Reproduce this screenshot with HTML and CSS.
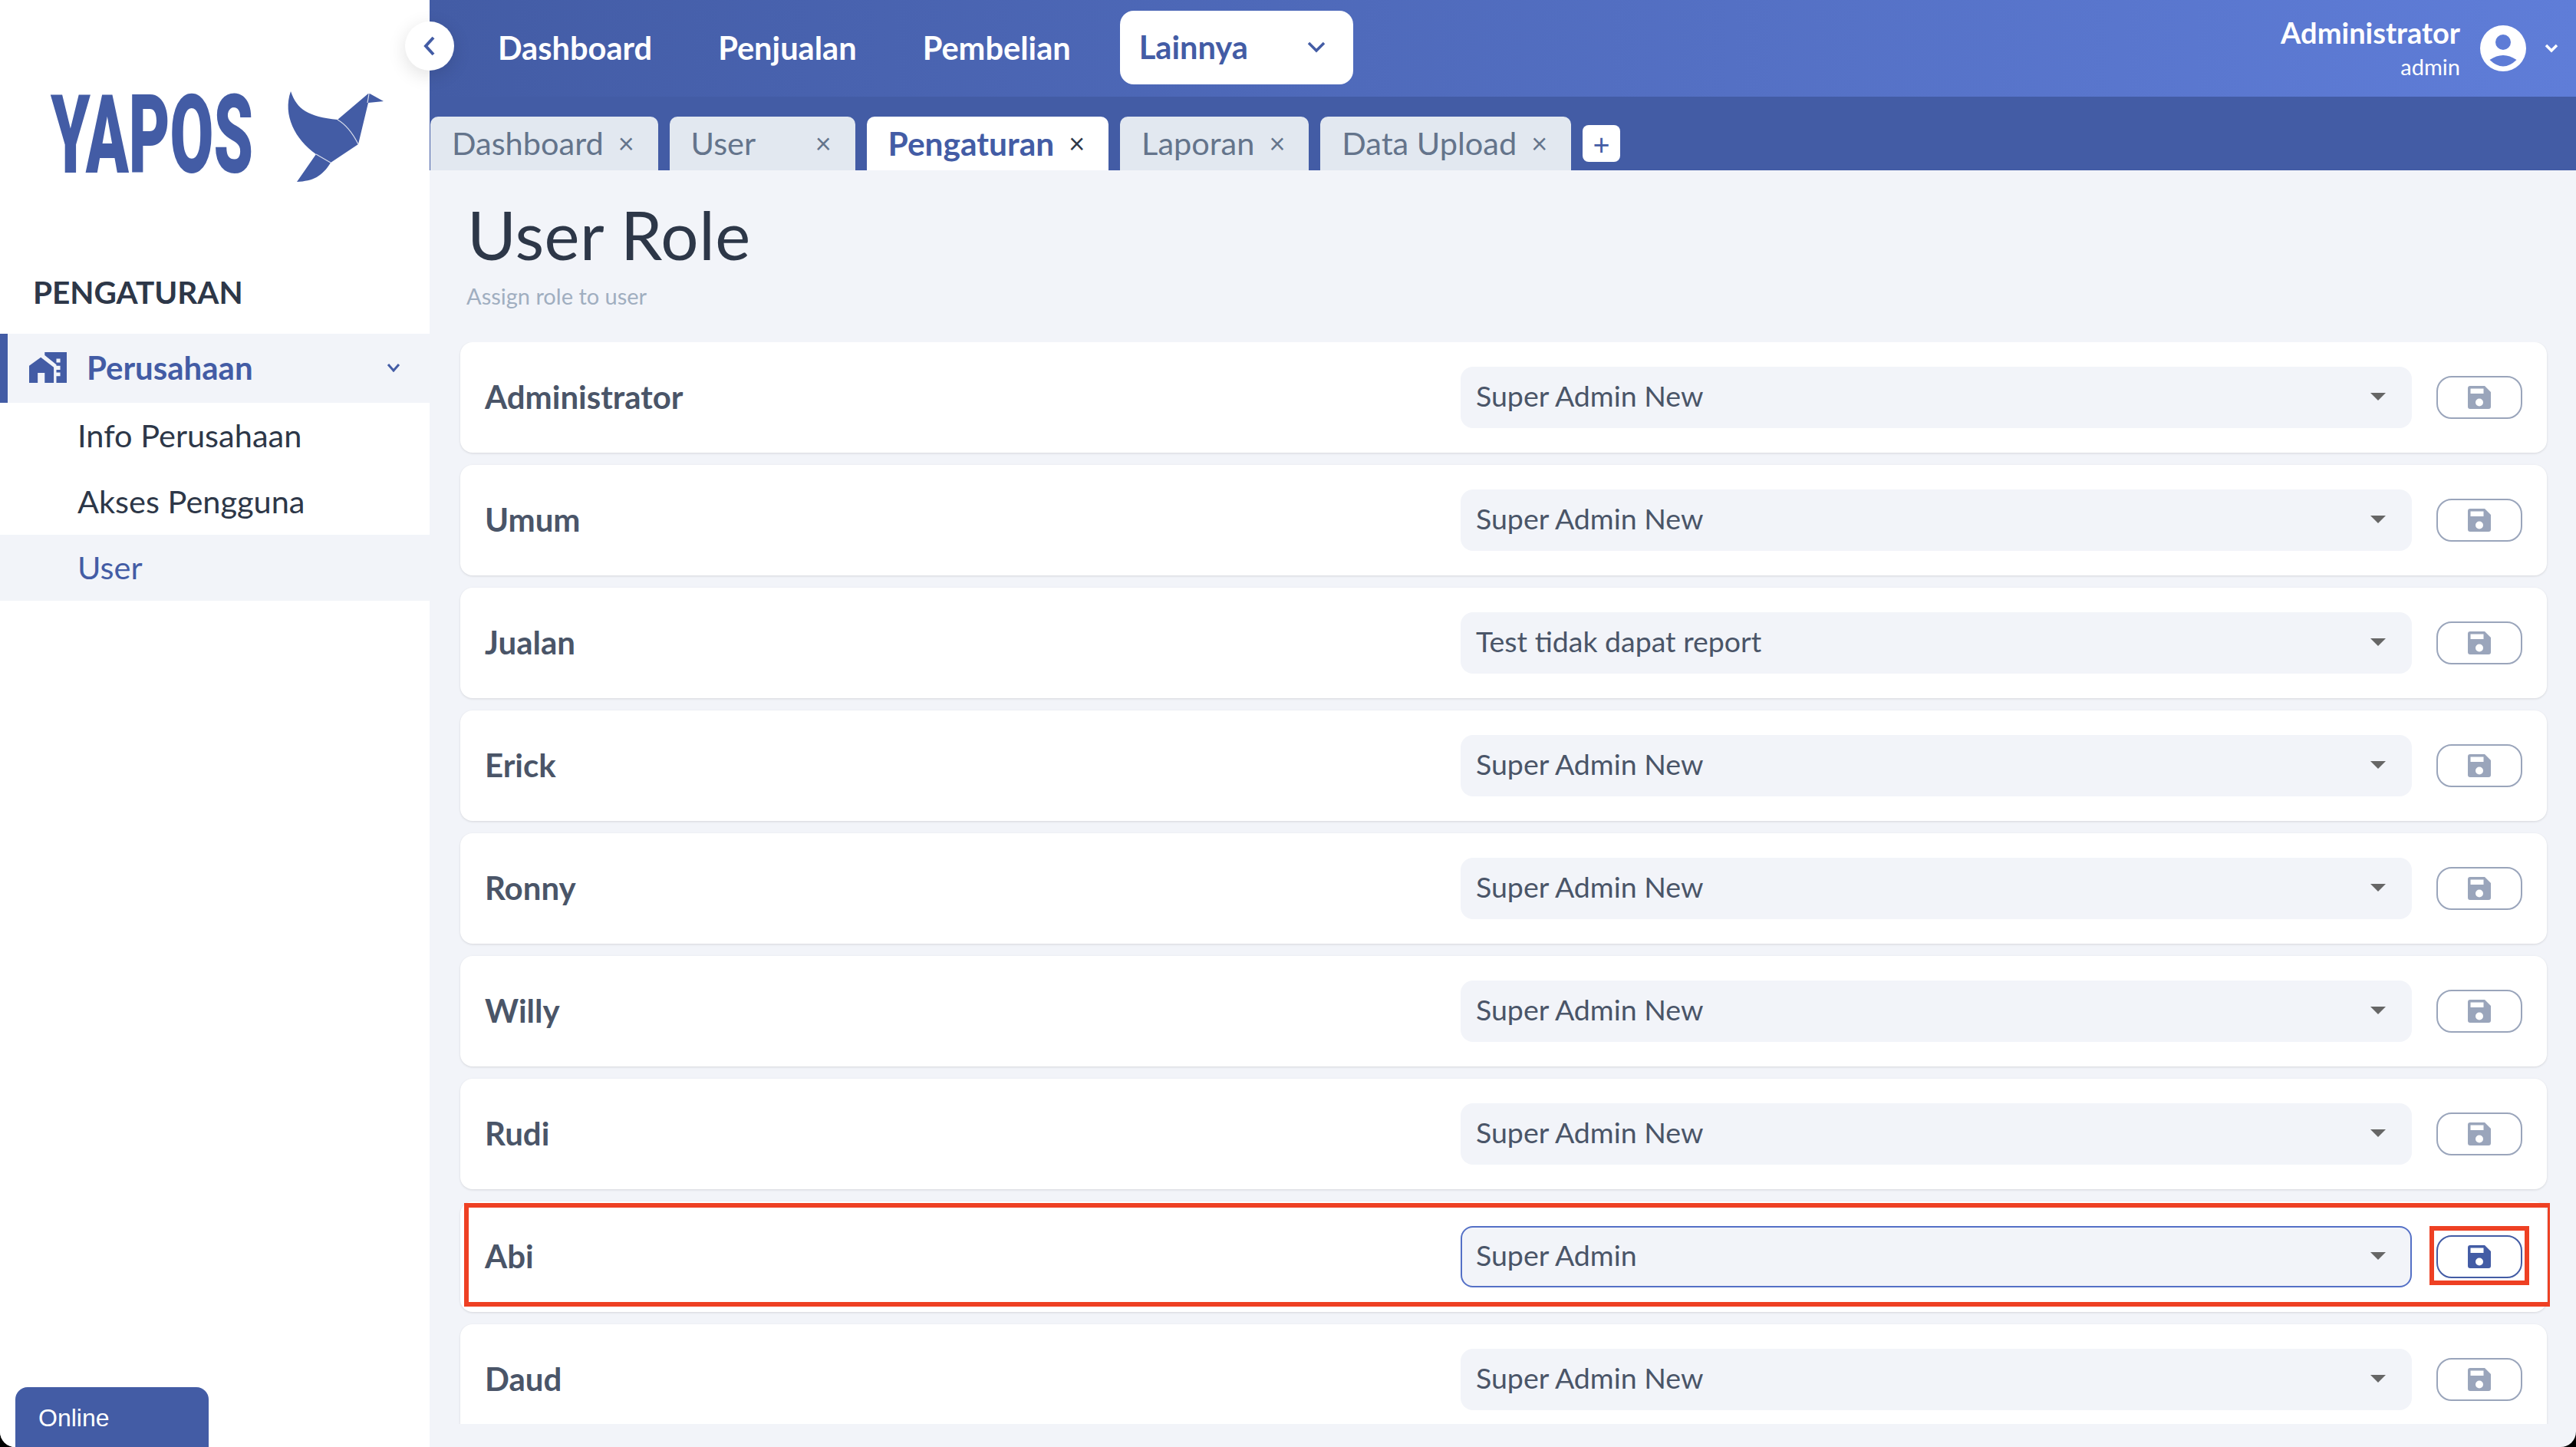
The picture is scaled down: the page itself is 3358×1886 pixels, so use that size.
FILE: index.html
```html
<!DOCTYPE html>
<html lang="en">
<head>
<meta charset="UTF-8" />
<title>YAPOS - User Role</title>
<link rel="stylesheet" href="styles.css">
</head>
<body>
<svg class="defs" width="0" height="0">
  <symbol id="save" viewBox="0 0 30 30">
    <path fill-rule="evenodd" d="M3 0H22L30 8V27a3 3 0 0 1-3 3H3a3 3 0 0 1-3-3V3a3 3 0 0 1 3-3ZM3.5 3.5V10H20.5V3.5ZM15 16.5a5 5 0 1 0 0 10a5 5 0 0 0 0-10Z"/>
  </symbol>
</svg>

<div class="app">
  <aside class="sidebar">
    <svg class="logo" viewBox="0 0 520 170" width="520" height="170">
      <text class="logo-text" x="26" y="135" textLength="264" lengthAdjust="spacingAndGlyphs">YAPOS</text>
      <path class="bird" d="M339 29C347 53 362 62 400 66L440 32H442L460 42L440 44L427 98L391 122C380 140 368 146 347 147L372 111C345 92 328 60 339 29Z"/>
      <path class="crease" d="M400 66C412 73 420 84 427 98M372 111L391 122M441 32L439 44"/>
    </svg>
    <h2 class="side-title">PENGATURAN</h2>
    <nav class="side-menu">
      <a class="side-parent">
        <svg class="house" viewBox="55 60 145 118" width="49" height="40">
          <path d="M55 112L100 80L150 118V178H115V140H88V178H55Z"/>
          <path d="M115 60H200V178H160V152H175V138H160V128H175V112H160V100H175V85H160V108L115 72Z"/>
        </svg>
        <span>Perusahaan</span>
        <svg class="side-chevron" viewBox="0 0 18 12" width="18" height="12"><path d="M2 2L9 10L16 2"/></svg>
      </a>
      <a class="side-item">Info Perusahaan</a>
      <a class="side-item">Akses Pengguna</a>
      <a class="side-item active">User</a>
    </nav>
    <div class="online">Online</div>
  </aside>

  <main class="main">
    <header class="topbar">
      <nav class="top-nav">
        <a>Dashboard</a>
        <a>Penjualan</a>
        <a>Pembelian</a>
        <a class="more">Lainnya
          <svg viewBox="0 0 24 16" width="24" height="16"><path d="M2 3L12 13L22 3"/></svg>
        </a>
      </nav>
      <div class="account">
        <div class="account-name">
          <strong>Administrator</strong>
          <span>admin</span>
        </div>
        <svg class="avatar" viewBox="0 0 60 60" width="60" height="60">
          <path fill-rule="evenodd" d="M30 0a30 30 0 1 0 0 60a30 30 0 0 0 0-60ZM30 12a10 10 0 1 1 0 20a10 10 0 0 1 0-20ZM12.5 45Q30 33 47.5 45Q30 62 12.5 45Z"/>
        </svg>
        <svg class="account-chevron" viewBox="0 0 18 12" width="18" height="12"><path d="M2 2L9 9L16 2"/></svg>
      </div>
    </header>

    <div class="tabbar">
      <div class="tab">Dashboard <i>×</i></div>
      <div class="tab tab-user">User <i>×</i></div>
      <div class="tab active">Pengaturan <i>×</i></div>
      <div class="tab">Laporan <i>×</i></div>
      <div class="tab">Data Upload <i>×</i></div>
      <button class="tab-add">+</button>
    </div>

    <section class="content">
      <h1>User Role</h1>
      <p class="subtitle">Assign role to user</p>

      <div class="role-list">
        <div class="role-card">
          <div class="role-name">Administrator</div>
          <div class="select">Super Admin New</div>
          <button class="save"><svg width="30" height="30"><use href="#save"/></svg></button>
        </div>
        <div class="role-card">
          <div class="role-name">Umum</div>
          <div class="select">Super Admin New</div>
          <button class="save"><svg width="30" height="30"><use href="#save"/></svg></button>
        </div>
        <div class="role-card">
          <div class="role-name">Jualan</div>
          <div class="select">Test tidak dapat report</div>
          <button class="save"><svg width="30" height="30"><use href="#save"/></svg></button>
        </div>
        <div class="role-card">
          <div class="role-name">Erick</div>
          <div class="select">Super Admin New</div>
          <button class="save"><svg width="30" height="30"><use href="#save"/></svg></button>
        </div>
        <div class="role-card">
          <div class="role-name">Ronny</div>
          <div class="select">Super Admin New</div>
          <button class="save"><svg width="30" height="30"><use href="#save"/></svg></button>
        </div>
        <div class="role-card">
          <div class="role-name">Willy</div>
          <div class="select">Super Admin New</div>
          <button class="save"><svg width="30" height="30"><use href="#save"/></svg></button>
        </div>
        <div class="role-card">
          <div class="role-name">Rudi</div>
          <div class="select">Super Admin New</div>
          <button class="save"><svg width="30" height="30"><use href="#save"/></svg></button>
        </div>
        <div class="role-card changed">
          <div class="role-name">Abi</div>
          <div class="select">Super Admin</div>
          <button class="save"><svg width="30" height="30"><use href="#save"/></svg></button>
          <div class="mark mark-row"></div>
          <div class="mark mark-save"></div>
        </div>
        <div class="role-card">
          <div class="role-name">Daud</div>
          <div class="select">Super Admin New</div>
          <button class="save"><svg width="30" height="30"><use href="#save"/></svg></button>
        </div>
      </div>
    </section>
  </main>

  <button class="collapse">
    <svg viewBox="0 0 16 26" width="16" height="26"><path d="M13 2L3 13L13 24"/></svg>
  </button>
</div>
</body>
</html>
```

FILE: styles.css
```css
/* Reset and base */
* {
  box-sizing: border-box;
}
html, body {
  margin: 0;
  height: 100%;
  background: #000;
  overflow: hidden;
  font-family: Lato, "Noto Sans", sans-serif;
  color: #2d3748;
}
.defs {
  position: absolute;
}
.app {
  position: relative;
  display: flex;
  height: 100%;
  background: #f2f4f9;
  border-radius: 0 0 20px 20px;
  overflow: hidden;
}

/* Sidebar */
.sidebar {
  width: 560px;
  flex: none;
  display: flex;
  flex-direction: column;
  background: #fff;
}
.logo {
  display: block;
  margin: 90px 0 0 40px;
}
.logo-text {
  font-family: Roboto, sans-serif;
  font-weight: 900;
  font-size: 143px;
  fill: #435ca5;
}
.bird {
  fill: #435ca5;
}
.crease {
  fill: none;
  stroke: #fff;
  stroke-width: 1.2;
  opacity: .8;
}
.side-title {
  margin: 97px 0 0 43px;
  height: 78px;
  font-size: 40.5px;
  line-height: 48px;
  font-weight: 700;
}
.side-parent {
  display: flex;
  align-items: center;
  height: 90px;
  padding-left: 28px;
  padding-bottom: 2px;
  border-left: 10px solid #435ca5;
  background: #f2f4f9;
  color: #435ca5;
  font-size: 42px;
  font-weight: 700;
}
.house {
  fill: #435ca5;
  margin-right: 26px;
}
.side-chevron {
  margin-left: auto;
  margin-right: 38px;
  fill: none;
  stroke: #435ca5;
  stroke-width: 3;
}
.side-item {
  display: block;
  height: 86px;
  padding-left: 101px;
  font-size: 41.5px;
  line-height: 84px;
}
.side-item.active {
  background: #f2f4f9;
  color: #435ca5;
}
.online {
  margin: auto 0 0 20px;
  width: 252px;
  height: 78px;
  padding: 22px 0 0 30px;
  border-radius: 16px 16px 0 0;
  background: #435ca5;
  color: #fff;
  font-family: "Liberation Sans", sans-serif;
  font-size: 32px;
  line-height: 36px;
}

/* Top bars */
.main {
  flex: 1;
  min-width: 0;
  display: flex;
  flex-direction: column;
  padding-bottom: 30px;
}
.topbar {
  height: 126px;
  flex: none;
  display: flex;
  align-items: center;
  justify-content: space-between;
  padding: 0 23px 0 89px;
  background: linear-gradient(90deg, #435ca5 0%, #5f7dd8 100%);
}
.top-nav {
  display: flex;
  align-items: center;
  gap: 86px;
  margin-top: -2px;
  color: #fff;
  font-size: 41.6px;
  font-weight: 700;
}
.more {
  display: flex;
  align-items: center;
  justify-content: space-between;
  width: 304px;
  height: 96px;
  margin-left: -22px;
  padding: 0 36px 2px 25px;
  border-radius: 18px;
  background: #fff;
  color: #435ca5;
}
.more svg {
  fill: none;
  stroke: #435ca5;
  stroke-width: 3.5;
}
.account {
  display: flex;
  align-items: center;
  color: #fff;
}
.account-name {
  display: flex;
  flex-direction: column;
  align-items: flex-end;
  margin-right: 26px;
  margin-top: 4px;
}
.account-name strong {
  font-size: 38px;
  line-height: 44px;
  font-weight: 700;
}
.account-name span {
  font-size: 29px;
  line-height: 46px;
}
.avatar {
  fill: #fff;
}
.account-chevron {
  margin-left: 24px;
  fill: none;
  stroke: #fff;
  stroke-width: 3.5;
}

/* Tabs */
.tabbar {
  height: 96px;
  flex: none;
  display: flex;
  align-items: flex-end;
  gap: 15px;
  padding-left: 1px;
  background: #435ca5;
}
.tab {
  display: flex;
  align-items: center;
  justify-content: space-between;
  gap: 19px;
  height: 70px;
  padding: 0 31px 2px 28px;
  border-radius: 10px 10px 0 0;
  background: #e2e8f0;
  color: #64748b;
  font-size: 41.5px;
}
.tab i {
  font-style: normal;
  font-size: 36px;
}
.tab-user {
  width: 242px;
}
.tab.active {
  background: #fff;
  color: #435ca5;
  font-size: 42.5px;
  font-weight: 700;
}
.tab.active i {
  color: #2d3748;
  font-size: 36px;
  font-weight: 400;
}
.tab-add {
  align-self: flex-start;
  width: 49px;
  height: 48px;
  margin-top: 37px;
  padding: 0;
  border: none;
  border-radius: 8px;
  background: #fff;
  color: #435ca5;
  font-family: Lato, sans-serif;
  font-size: 38px;
  line-height: 44px;
}

/* Content */
.content {
  flex: 1;
  min-height: 0;
  display: flex;
  flex-direction: column;
  padding: 0 38px 0 40px;
}
h1 {
  margin: 32px 0 0 9px;
  font-size: 87px;
  line-height: 104px;
  font-weight: 400;
  letter-spacing: .5px;
}
.subtitle {
  margin: 11px 0 43px 8px;
  color: #a0aec0;
  font-size: 29px;
  line-height: 34px;
}
.role-list {
  flex: 1;
  min-height: 0;
  display: flex;
  flex-direction: column;
  gap: 16px;
  margin: 0 -4px;
  padding: 0 4px;
  overflow: hidden;
}
.role-card {
  position: relative;
  flex: none;
  height: 144px;
  display: flex;
  align-items: center;
  padding: 0 32px;
  border-radius: 16px;
  background: #fff;
  box-shadow: 0 1px 3px rgba(0, 0, 0, 0.12);
}
.role-name {
  flex: 1;
  padding-bottom: 2px;
  color: #4a5568;
  font-size: 42px;
  font-weight: 700;
}
.select {
  position: relative;
  width: 1240px;
  height: 80px;
  padding-left: 20px;
  border-radius: 16px;
  background: #f2f4f9;
  color: #4a5568;
  font-size: 37.5px;
  line-height: 76px;
}
.select::after {
  content: "";
  position: absolute;
  right: 34px;
  top: 34px;
  border-style: solid;
  border-width: 10px 10px 0;
  border-color: #666 transparent transparent;
}
.save {
  display: flex;
  align-items: center;
  justify-content: center;
  width: 112px;
  height: 56px;
  margin-left: 32px;
  padding: 0;
  border: 2px solid #9aa5bb;
  border-radius: 20px;
  background: #fff;
  color: #9aa5bb;
}
.save svg {
  fill: currentColor;
}
.changed .select {
  border: 2px solid #5470c6;
  line-height: 72px;
  padding-left: 18px;
}
.changed .select::after {
  right: 32px;
  top: 32px;
}
.changed .save {
  border-color: #435ca5;
  color: #435ca5;
}

/* Red annotation boxes drawn over the Abi row */
.mark {
  position: absolute;
  border: 6px solid #ee4023;
  pointer-events: none;
}
.mark-row {
  left: 5px;
  right: -7px;
  top: 2px;
  bottom: 7px;
}
.mark-save {
  left: 2567px;
  top: 32px;
  width: 130px;
  height: 77px;
}

/* Collapse button sits across the sidebar edge */
.collapse {
  position: absolute;
  left: 528px;
  top: 28px;
  width: 64px;
  height: 64px;
  padding: 0;
  border: none;
  border-radius: 50%;
  background: #fff;
  box-shadow: 0 6px 24px rgba(0, 0, 0, 0.12);
}
.collapse svg {
  display: block;
  margin: auto;
  fill: none;
  stroke: #435ca5;
  stroke-width: 4;
}
```
